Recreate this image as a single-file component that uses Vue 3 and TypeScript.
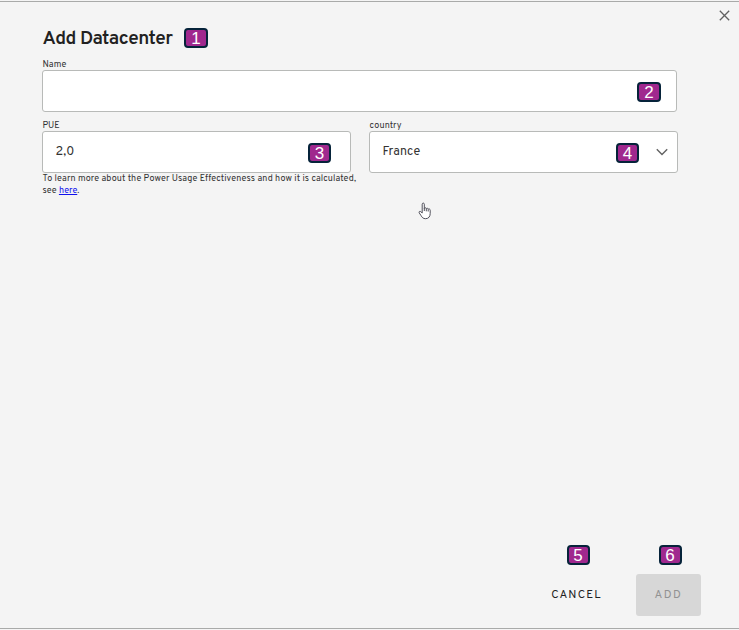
<script setup lang="ts">
import { ref } from 'vue'

const name = ref('')
const pue = ref('2,0')
const country = ref('France')
</script>

<template>
  <main class="dialog">
    <button class="close" aria-label="Close">
      <svg width="11" height="11" viewBox="0 0 11 11"><path d="M.8.8l9.4 9.4M10.2.8L.8 10.2" /></svg>
    </button>
    <header class="heading">
      <h1>Add Datacenter</h1>
      <span class="badge wide">1</span>
    </header>

    <form class="form" @submit.prevent>
      <div class="field full">
        <label class="name-label">Name</label>
        <div class="control name-control"><span class="value">{{ name }}</span><span class="badge wide">2</span></div>
      </div>
      <div class="field">
        <label class="pue-label">PUE</label>
        <div class="control pue-control"><span class="value pue-value">{{ pue }}</span><span class="badge">3</span></div>
        <p class="hint"><span class="hint-line">To learn more about the Power Usage Effectiveness and how it is calculated,</span><br><span class="hint-end">see <a href="#">here</a>.</span></p>
      </div>
      <div class="field">
        <label class="country-label">country</label>
        <div class="control country-control">
          <span class="value">{{ country }}</span><span class="badge">4</span>
          <svg class="chevron" width="12" height="8" viewBox="0 0 12 8"><path d="M.8 1.2L6 6.4l5.2-5.2" /></svg>
        </div>
      </div>
    </form>

    <svg class="pointer" width="14" height="18" viewBox="0 0 14 18">
      <path d="M4.2 11V2.2c0-1.5 2.1-1.5 2.1 0v4.2c.3-1 1.9-.8 2 .3.4-.8 1.8-.5 1.9.5.6-.7 2-.2 2 1v3.3c0 3-1.6 5.2-4.6 5.2-2.5 0-3.5-1.3-4.5-3L1.2 10.8c-.6-1.2.7-2 1.6-1.1z" />
      <path d="M6.3 6v3M8.3 6.7v2.6M10.2 7.3v2.2" />
    </svg>

    <footer class="footer">
      <div class="action">
        <span class="badge">5</span>
        <button class="btn cancel">CANCEL</button>
      </div>
      <div class="action">
        <span class="badge">6</span>
        <button class="btn add" disabled>ADD</button>
      </div>
    </footer>
  </main>
</template>

<style>
body {
  margin: 0;
  background: #f4f4f4;
}
</style>

<style scoped>
.dialog {
  position: relative;
  box-sizing: border-box;
  display: flex;
  flex-direction: column;
  height: 628px;
  margin-top: 1px;
  padding: 25px 38px 12px 42px;
  border-top: 1px solid #a9aaa9;
  border-bottom: 1px solid #a9aaa9;
  background: #f4f4f4;
  color: #212121;
  font-family: Overpass, Roboto, sans-serif;
}
button {
  margin: 0;
  padding: 0;
  border: 0;
  font-family: inherit;
}
.close {
  position: absolute;
  top: 8px;
  right: 9px;
  width: 11px;
  height: 11px;
  background: none;
}
svg {
  display: block;
  fill: none;
}
.close svg {
  stroke: #606060;
  stroke-width: 1.3;
}
.heading {
  display: flex;
  align-items: center;
  gap: 11px;
  height: 22px;
}
h1 {
  box-sizing: border-box;
  width: 131px;
  margin: 0;
  padding: 1px 0 0 .5px;
  font-size: 19px;
  line-height: 22px;
  font-weight: 600;
  letter-spacing: -.53px;
  white-space: nowrap;
}
.badge {
  box-sizing: border-box;
  flex: none;
  display: block;
  width: 23px;
  height: 20px;
  border: 2px solid #06233a;
  border-radius: 4px;
  background: #a0288e;
  color: #fff;
  font: 17px/18px "Liberation Sans", sans-serif;
  text-align: center;
}
.wide {
  width: 24px;
}
.form {
  display: grid;
  grid-template-columns: 309px 309px;
  column-gap: 18px;
}
.full {
  grid-column: 1 / -1;
  height: 70px;
}
label {
  display: block;
  box-sizing: border-box;
  height: 12px;
  padding: .5px 0 0 .6px;
  font-size: 9px;
  line-height: 12px;
  color: #333;
}
.full label {
  height: 21px;
  padding-top: 9.5px;
}
.name-label { letter-spacing: .1px; }
.pue-label { letter-spacing: -.1px; }
.country-label { letter-spacing: .15px; }
.control {
  box-sizing: border-box;
  display: flex;
  align-items: center;
  height: 42px;
  padding: 1px 13px 0 12.5px;
  border: 1px solid #b8bab8;
  border-radius: 3px;
  background: #fff;
}
.name-control {
  width: 635px;
  padding-right: 15px;
}
.pue-control {
  padding-right: 19px;
}
.country-control {
  padding-right: 9px;
}
.value {
  flex: 1;
  position: relative;
  top: -1px;
  font-size: 12.5px;
  letter-spacing: -.02px;
  color: #333;
}
.pue-value { letter-spacing: .1px; }
.chevron {
  margin-left: 17px;
  margin-top: -1px;
  stroke: #626262;
  stroke-width: 1.4;
}
.hint {
  margin: 0;
  padding-left: .6px;
  font-size: 9px;
  line-height: 12px;
  color: #333;
  white-space: nowrap;
}
.hint-line { letter-spacing: .12px; }
.hint-end { letter-spacing: .05px; }
.hint a {
  color: #1111ee;
}
.pointer {
  position: absolute;
  top: 200px;
  left: 418px;
  fill: #fff;
  stroke: #50505b;
  stroke-width: 1;
}
.footer {
  display: flex;
  justify-content: flex-end;
  gap: 27px;
  margin-top: auto;
}
.action {
  display: flex;
  flex-direction: column;
  align-items: center;
  gap: 9px;
}
.action .badge {
  margin-left: 3px;
}
.btn {
  width: 65px;
  height: 42px;
  border-radius: 3px;
  background: transparent;
  font-size: 11.5px;
  line-height: 42px;
  letter-spacing: 1.6px;
  color: #212121;
}
.cancel {
  letter-spacing: 1.2px;
}
.add {
  background: #d7d7d7;
  color: #929292;
}
</style>
